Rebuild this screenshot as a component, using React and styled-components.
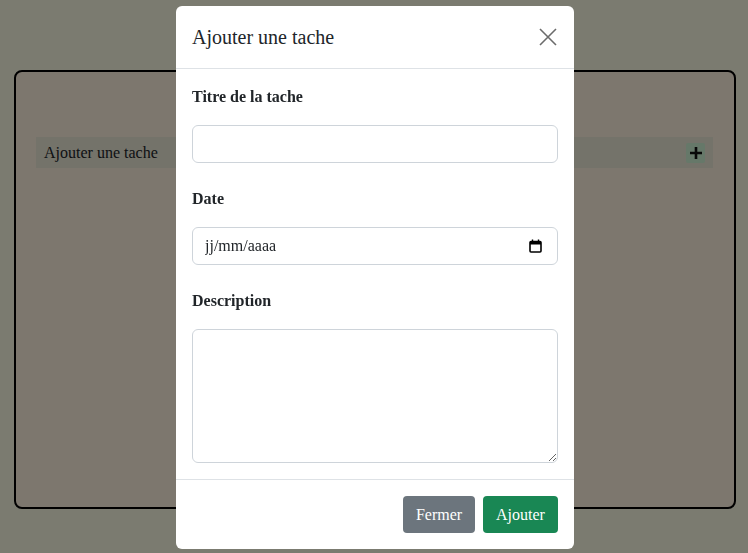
import React from "react";
import styled, { createGlobalStyle } from "styled-components";

const Global = createGlobalStyle`
  html, body { margin: 0; padding: 0; }
  body {
    background: #f6f6e0;
    font-family: "Liberation Serif", "Times New Roman", serif;
    color: #212529;
    width: 748px;
    height: 553px;
    overflow: hidden;
  }
  * { box-sizing: border-box; }
`;

const Page = styled.div`
  padding: 70px 12px 0 14px;
`;

const Card = styled.div`
  height: 439px;
  border: 2px solid #000;
  border-radius: 8px;
  background: #faeedc;
  padding: 65px 21px 0 20px;
`;

const TaskRow = styled.div`
  display: flex;
  align-items: center;
  justify-content: space-between;
  height: 31px;
  padding: 0 8px;
  background: #e8e6d4;
  font-size: 16px;
`;

const PlusBox = styled.span`
  display: flex;
  align-items: center;
  justify-content: center;
  width: 19px;
  height: 20px;
  background: #cdf0d2;
  border-radius: 2px;
`;

const Backdrop = styled.div`
  position: fixed;
  inset: 0;
  background: rgba(0, 0, 0, 0.5);
`;

const Modal = styled.div`
  position: fixed;
  top: 6px;
  left: 176px;
  width: 398px;
  background: #fff;
  border-radius: 6px;
  display: flex;
  flex-direction: column;
`;

const Header = styled.div`
  display: flex;
  align-items: center;
  justify-content: space-between;
  padding: 16px 16px 16px 16px;
  border-bottom: 1px solid #dee2e6;
`;

const Title = styled.h5`
  margin: 0;
  font-size: 20px;
  font-weight: 400;
  line-height: 30px;
`;

const CloseBtn = styled.button`
  border: 0;
  background: transparent;
  padding: 0;
  width: 20px;
  height: 20px;
  margin-right: 0;
  display: flex;
  align-items: center;
  justify-content: center;
  cursor: pointer;
`;

const Body = styled.div`
  padding: 16px;
  display: flex;
  flex-direction: column;
`;

const Field = styled.div`
  display: flex;
  flex-direction: column;
  gap: 16px;
  margin-bottom: ${(p) => (p.$last ? "0" : "24px")};
`;

const Label = styled.label`
  font-weight: 700;
  font-size: 16px;
  line-height: 24px;
`;

const baseInput = `
  width: 100%;
  border: 1px solid #ced4da;
  border-radius: 6px;
  background: #fff;
  font-family: "Liberation Serif", "Times New Roman", serif;
  font-size: 16px;
  color: #212529;
`;

const TextInput = styled.input`
  ${baseInput}
  height: 38px;
  padding: 6px 12px;
`;

const DateBox = styled.div`
  ${baseInput}
  height: 38px;
  padding: 0 15px 0 12px;
  display: flex;
  align-items: center;
`;

const DateInput = styled.input`
  flex: 1;
  border: 0;
  outline: none;
  background: transparent;
  font-family: inherit;
  font-size: 16px;
  padding: 0;
  &::placeholder { color: #212529; opacity: 1; }
`;

const TextArea = styled.textarea`
  ${baseInput}
  height: 134px;
  padding: 6px 12px;
  resize: vertical;
`;

const Footer = styled.div`
  display: flex;
  justify-content: flex-end;
  gap: 8px;
  padding: 16px 16px 16px;
  border-top: 1px solid #dee2e6;
`;

const Button = styled.button`
  height: 37px;
  padding: 0 12px;
  border: 0;
  border-radius: 4px;
  color: #fff;
  font-family: "Liberation Serif", "Times New Roman", serif;
  font-size: 16px;
  background: ${(p) => (p.$variant === "success" ? "#198754" : "#6c757d")};
  width: ${(p) => p.$w}px;
`;

export default function App() {
  return (
    <>
      <Global />
      <Page>
        <Card>
          <TaskRow>
            <span>Ajouter une tache</span>
            <PlusBox>
              <svg width="14" height="14" viewBox="0 0 14 14">
                <path d="M7 1v12M1 7h12" stroke="#111" strokeWidth="2.6" />
              </svg>
            </PlusBox>
          </TaskRow>
        </Card>
      </Page>
      <Backdrop />
      <Modal>
        <Header>
          <Title>Ajouter une tache</Title>
          <CloseBtn aria-label="Fermer">
            <svg width="18" height="18" viewBox="0 0 18 18">
              <path d="M1 1L17 17M17 1L1 17" stroke="#6b6b6b" strokeWidth="1.6" />
            </svg>
          </CloseBtn>
        </Header>
        <Body>
          <Field>
            <Label>Titre de la tache</Label>
            <TextInput type="text" />
          </Field>
          <Field>
            <Label>Date</Label>
            <DateBox>
              <DateInput type="text" placeholder="jj/mm/aaaa" />
              <svg width="13" height="14" viewBox="0 0 13 14">
                <rect x="1" y="2.5" width="11" height="10.5" rx="1" fill="none" stroke="#000" strokeWidth="1.6" />
                <rect x="1" y="2.5" width="11" height="3" fill="#000" />
                <path d="M3.5 0.5v2.5M9.5 0.5v2.5" stroke="#000" strokeWidth="1.4" />
              </svg>
            </DateBox>
          </Field>
          <Field $last>
            <Label>Description</Label>
            <TextArea />
          </Field>
        </Body>
        <Footer>
          <Button $w={72}>Fermer</Button>
          <Button $variant="success" $w={75}>Ajouter</Button>
        </Footer>
      </Modal>
    </>
  );
}
